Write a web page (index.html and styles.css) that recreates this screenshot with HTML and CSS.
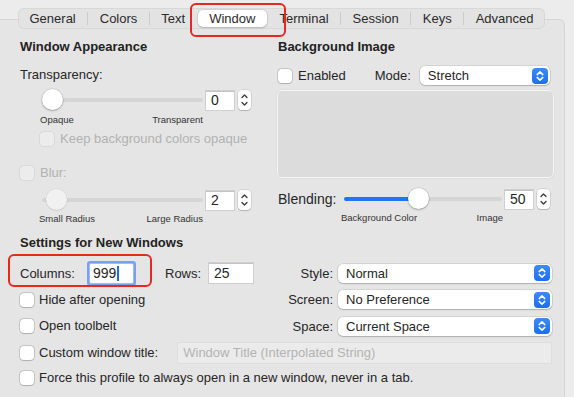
FILE: index.html
```html
<!DOCTYPE html>
<html>
<head>
<meta charset="utf-8">
<title>Window</title>
<link rel="stylesheet" href="styles.css">
</head>
<body>
<div class="tabbar">
  <div class="seg">General</div><span class="sep"></span>
  <div class="seg">Colors</div><span class="sep"></span>
  <div class="seg">Text</div>
  <div class="seg active">Window</div>
  <div class="seg">Terminal</div><span class="sep"></span>
  <div class="seg">Session</div><span class="sep"></span>
  <div class="seg">Keys</div><span class="sep"></span>
  <div class="seg">Advanced</div>
</div>

<div class="panel">
  <div class="top">
    <div class="col">
      <div class="heading h-first">Window Appearance</div>
      <div class="label-row r-transp">Transparency:</div>
      <div class="slider-row r-slider1">
        <div class="slider">
          <div class="track"></div>
          <div class="knob" style="left:0px"></div>
        </div>
        <div class="field num">0</div>
        <div class="stepper">
          <svg viewBox="0 0 13 20" width="13" height="20"><path d="M4 7.5 L6.5 5 L9 7.5" /><path d="M4 12.5 L6.5 15 L9 12.5" /></svg>
        </div>
      </div>
      <div class="ticks r-ticks"><span>Opaque</span><span>Transparent</span></div>
      <div class="check-row disabled r-keep"><span class="box"></span><span>Keep background colors opaque</span></div>
      <div class="check-row disabled r-blur"><span class="box"></span><span>Blur:</span></div>
      <div class="slider-row r-slider2">
        <div class="slider">
          <div class="track"></div>
          <div class="knob off" style="left:4px"></div>
        </div>
        <div class="field num">2</div>
        <div class="stepper">
          <svg viewBox="0 0 13 20" width="13" height="20"><path d="M4 7.5 L6.5 5 L9 7.5" /><path d="M4 12.5 L6.5 15 L9 12.5" /></svg>
        </div>
      </div>
      <div class="ticks r-ticks2"><span>Small Radius</span><span>Large Radius</span></div>
    </div>

    <div class="col">
      <div class="heading h-first">Background Image</div>
      <div class="enabled-row">
        <div class="check-row"><span class="box"></span><span>Enabled</span></div>
        <span class="mode-label">Mode:</span>
        <div class="popup mode-popup"><span>Stretch</span>
          <span class="arrows"><svg viewBox="0 0 16 16" width="16" height="16"><path d="M5.2 6.6 L8 3.9 L10.8 6.6" /><path d="M5.2 9.4 L8 12.1 L10.8 9.4" /></svg></span>
        </div>
      </div>
      <div class="well"></div>
      <div class="blend-row">
        <span class="blend-label">Blending:</span>
        <div class="slider wide">
          <div class="track"></div>
          <div class="fill" style="width:75px"></div>
          <div class="knob" style="left:64px"></div>
        </div>
        <div class="field num">50</div>
        <div class="stepper">
          <svg viewBox="0 0 13 20" width="13" height="20"><path d="M4 7.5 L6.5 5 L9 7.5" /><path d="M4 12.5 L6.5 15 L9 12.5" /></svg>
        </div>
      </div>
      <div class="ticks blend-ticks"><span>Background Color</span><span>Image</span></div>
    </div>
  </div>

  <div class="heading h-settings">Settings for New Windows</div>

  <div class="settings">
    <div class="size-row">
      <span class="cols-label">Columns:</span>
      <div class="field focus">999<span class="caret"></span></div>
      <span class="rows-label">Rows:</span>
      <div class="field rows-field">25</div>
    </div>
    <div class="pop-row">
      <span class="pop-label">Style:</span>
      <div class="popup"><span>Normal</span>
        <span class="arrows"><svg viewBox="0 0 16 16" width="16" height="16"><path d="M5.2 6.6 L8 3.9 L10.8 6.6" /><path d="M5.2 9.4 L8 12.1 L10.8 9.4" /></svg></span>
      </div>
    </div>
    <div class="check-row"><span class="box"></span><span>Hide after opening</span></div>
    <div class="pop-row">
      <span class="pop-label">Screen:</span>
      <div class="popup"><span>No Preference</span>
        <span class="arrows"><svg viewBox="0 0 16 16" width="16" height="16"><path d="M5.2 6.6 L8 3.9 L10.8 6.6" /><path d="M5.2 9.4 L8 12.1 L10.8 9.4" /></svg></span>
      </div>
    </div>
    <div class="check-row"><span class="box"></span><span>Open toolbelt</span></div>
    <div class="pop-row">
      <span class="pop-label">Space:</span>
      <div class="popup"><span>Current Space</span>
        <span class="arrows"><svg viewBox="0 0 16 16" width="16" height="16"><path d="M5.2 6.6 L8 3.9 L10.8 6.6" /><path d="M5.2 9.4 L8 12.1 L10.8 9.4" /></svg></span>
      </div>
    </div>
  </div>

  <div class="title-row">
    <div class="check-row"><span class="box"></span><span>Custom window title:</span></div>
    <div class="field title-field">Window Title (Interpolated String)</div>
  </div>
  <div class="check-row force-row"><span class="box"></span><span>Force this profile to always open in a new window, never in a tab.</span></div>
</div>

<div class="mark mark-tab"></div>
<div class="mark mark-cols"></div>
</body>
</html>
```

FILE: styles.css
```css
html, body {
  margin: 0;
  padding: 0;
}
body {
  width: 574px;
  height: 397px;
  overflow: hidden;
  position: relative;
  background: #ececec;
  font-family: "Liberation Sans", Arial, sans-serif;
  font-size: 13px;
  color: #262626;
}

/* segmented tab bar */
.tabbar {
  position: relative;
  z-index: 1;
  display: flex;
  align-items: center;
  width: max-content;
  height: 21px;
  margin: 8px 0 0 18px;
  background: #e3e3e3;
  border-radius: 6px;
  box-shadow: inset 0 0 0 1px #d8d8d8;
}
.seg {
  padding: 0 11.5px;
  line-height: 21px;
  color: #2a2a2a;
}
.seg.active {
  height: 17px;
  line-height: 17px;
  margin: 0 1px;
  background: #fff;
  border-radius: 5px;
  box-shadow: 0 0 0 0.5px rgba(0,0,0,0.12), 0 1px 2px rgba(0,0,0,0.16);
}
.sep {
  width: 1px;
  height: 13px;
  background: #cdcdcd;
}

/* panel */
.panel {
  box-sizing: border-box;
  width: 565px;
  height: 378px;
  overflow: hidden;
  margin-top: -10px;
  padding-left: 20px;
  background: #e5e5e5;
  border-top: 1px solid #d5d5d5;
  border-right: 1px solid #d5d5d5;
  border-top-right-radius: 6px;
}
.top {
  display: grid;
  grid-template-columns: 258px 278px;
}
.col {
  display: flex;
  flex-direction: column;
}
.heading {
  height: 16px;
  line-height: 16px;
  font-weight: bold;
  color: #222;
}
.h-first { margin-top: 19px; }
.label-row {
  height: 16px;
  line-height: 16px;
}
.r-transp { margin-top: 12px; }

.slider-row {
  display: flex;
  align-items: center;
  height: 20px;
  margin-left: 22px;
}
.r-slider1 { margin-top: 7px; }
.r-slider2 { margin-top: 9px; }
.slider {
  position: relative;
  width: 161px;
  height: 20px;
  display: flex;
  align-items: center;
}
.slider.wide { width: 158px; }
.track {
  width: 100%;
  height: 4px;
  border-radius: 2px;
  background: #d5d5d5;
}
.fill {
  position: absolute;
  left: 0;
  top: 8px;
  height: 4px;
  border-radius: 2px;
  background: #1f75f4;
}
.knob {
  position: absolute;
  top: -1px;
  width: 21px;
  height: 21px;
  border-radius: 50%;
  background: #fff;
  box-shadow: 0 0 0 0.5px rgba(0,0,0,0.12), 0 1px 2px rgba(0,0,0,0.25);
}
.knob.off {
  background: #f1f1f1;
  box-shadow: 0 0 0 0.5px rgba(0,0,0,0.06), 0 1px 1px rgba(0,0,0,0.08);
}

.field {
  box-sizing: border-box;
  height: 18px;
  line-height: 18px;
  padding: 0 5px;
  background: #fff;
  box-shadow: 0 0 0 1px #cfcfcf, inset 0 1px 0 #c4c4c4;
}
.field.num {
  width: 28px;
  margin-left: 3px;
  height: 19px;
  line-height: 19px;
  font-size: 14px;
}
.stepper {
  width: 13px;
  height: 20px;
  margin-left: 4px;
  border-radius: 4px;
  background: #fdfdfd;
  box-shadow: 0 0 0 0.5px rgba(0,0,0,0.15), 0 1px 1px rgba(0,0,0,0.15);
}
.stepper svg { display: block; }
.stepper path {
  fill: none;
  stroke: #3a3a3a;
  stroke-width: 1.3;
  stroke-linecap: round;
  stroke-linejoin: round;
}

.ticks {
  display: flex;
  justify-content: space-between;
  height: 14px;
  line-height: 14px;
  font-size: 9.5px;
  color: #333;
}
.r-ticks { margin: 3px 0 0 20px; width: 163px; }
.r-ticks2 { margin: 2px 0 0 19px; width: 164px; }

.check-row {
  display: flex;
  align-items: center;
  gap: 5px;
  height: 16px;
  line-height: 16px;
  white-space: nowrap;
}
.box {
  box-sizing: border-box;
  width: 14px;
  height: 14px;
  flex: none;
  border-radius: 3.5px;
  background: #fff;
  box-shadow: 0 0 0 0.5px rgba(0,0,0,0.25), 0 0.5px 1px rgba(0,0,0,0.12);
}
.check-row.disabled { color: #b2b2b2; }
.check-row.disabled .box {
  background: #ececec;
  box-shadow: 0 0 0 0.5px rgba(0,0,0,0.1);
}
.r-keep { margin-top: 4px; margin-left: 20px; gap: 6px; }
.r-blur { margin-top: 18px; gap: 6px; }

/* right column */
.enabled-row {
  display: flex;
  align-items: center;
  height: 19px;
  margin-top: 11px;
}
.enabled-row .check-row { gap: 6px; }
.mode-label { margin-left: 29px; }
.popup {
  box-sizing: border-box;
  display: flex;
  align-items: center;
  justify-content: space-between;
  height: 19px;
  padding: 0 2px 0 8px;
  background: #fff;
  border-radius: 5px;
  box-shadow: 0 0 0 0.5px rgba(0,0,0,0.14), 0 1px 1.5px rgba(0,0,0,0.18);
}
.mode-popup {
  width: 130px;
  margin-left: 9px;
}
.arrows {
  width: 16px;
  height: 16px;
  border-radius: 4px;
  background: linear-gradient(#3d8bf8, #1a6ff0);
}
.arrows svg { display: block; }
.arrows path {
  fill: none;
  stroke: #fff;
  stroke-width: 1.5;
  stroke-linecap: round;
  stroke-linejoin: round;
}
.well {
  box-sizing: border-box;
  width: 277px;
  height: 88px;
  margin: 5px 0 0 -1px;
  background: #dcdcdc;
  border: 1.5px solid #f6f6f6;
  border-radius: 5px;
  box-shadow: 0 0 0 0.5px rgba(0,0,0,0.06);
}
.blend-row {
  display: flex;
  align-items: center;
  height: 20px;
  margin-top: 11px;
}
.blend-label {
  width: 66px;
  font-size: 14px;
}
.blend-ticks {
  width: 162px;
  margin: 2px 0 0 63px;
}

/* settings for new windows */
.h-settings { margin-top: 9px; }
.settings {
  display: grid;
  grid-template-columns: 258px 274px;
  grid-template-rows: 26px 27px 26px;
  align-items: center;
  margin-top: 9px;
}
.size-row {
  display: flex;
  align-items: center;
}
.cols-label { width: 70px; }
.field.focus {
  width: 43px;
  height: 19px;
  line-height: 19px;
  padding-left: 3px;
  font-size: 14px;
  box-shadow: 0 0 0 1px #9dbcf2, 0 0 0 3px rgba(74,135,240,0.7);
  border-radius: 1px;
  display: flex;
  align-items: center;
}
.caret {
  width: 1.5px;
  height: 15px;
  margin-left: 1px;
  background: #1b6cf2;
}
.rows-label { margin-left: 32px; width: 44px; }
.rows-field {
  width: 44px;
  height: 20px;
  line-height: 20px;
  font-size: 14px;
}
.pop-row {
  display: flex;
  align-items: center;
}
.pop-label {
  width: 55px;
  text-align: right;
  margin-right: 5px;
}
.pop-row .popup { width: 214px; }

.title-row {
  display: flex;
  align-items: center;
  height: 20px;
  margin-top: 4px;
}
.title-field {
  width: 373px;
  height: 20px;
  line-height: 20px;
  margin-left: 20px;
  padding-left: 5px;
  background: #ebebeb;
  color: #b3b3b3;
  box-shadow: 0 0 0 1px #dedede;
}
.force-row { margin-top: 7px; }

/* annotation marks */
.mark {
  position: absolute;
  z-index: 2;
  box-sizing: border-box;
  border: 2.5px solid #e8281d;
  border-radius: 6px;
}
.mark-tab {
  left: 190px;
  top: 3px;
  width: 96px;
  height: 34px;
}
.mark-cols {
  left: 8px;
  top: 254px;
  width: 144px;
  height: 33px;
}
```
